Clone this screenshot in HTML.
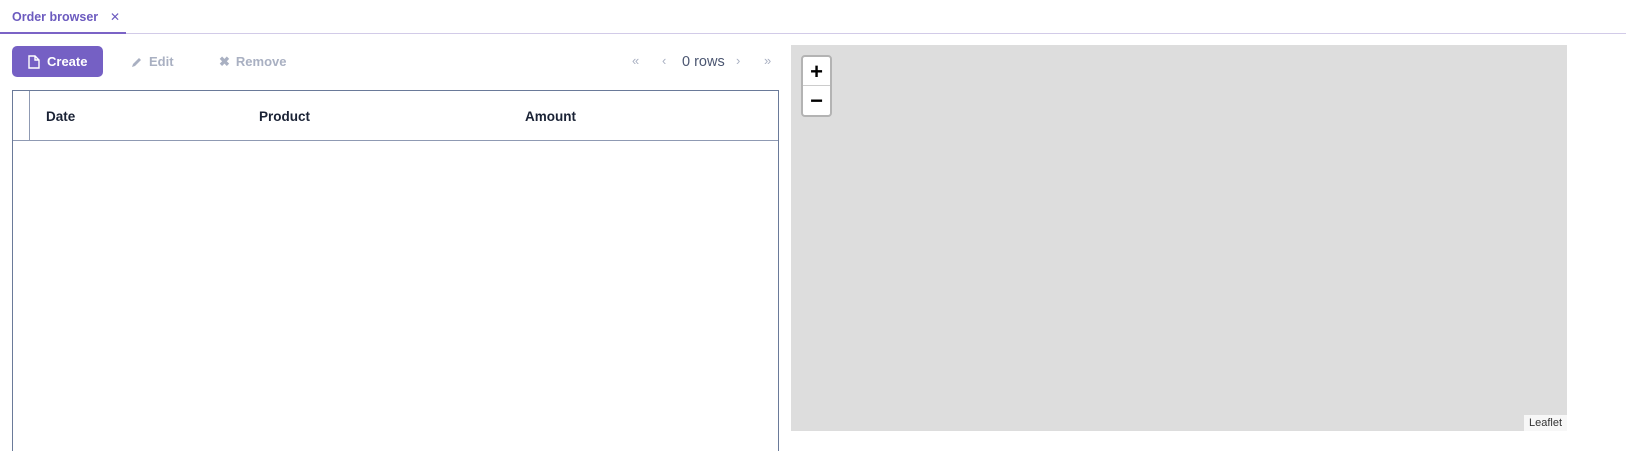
<!DOCTYPE html>
<html><head><meta charset="utf-8"><style>
*{box-sizing:border-box;margin:0;padding:0}
html,body{width:1626px;height:451px;overflow:hidden}
body{background:#fff;font-family:"Liberation Sans",sans-serif;position:relative}
.tabbar{position:absolute;left:0;top:0;width:1626px;height:34px;border-bottom:1px solid #d2cbe8}
.tab{position:absolute;left:0;top:0;width:126px;height:34px;border-bottom:2px solid #7b63c6;color:#6c5bbf;font-size:12.5px;font-weight:bold;padding:10px 0 0 12px}
.tab .x{position:absolute;left:110px;top:10px;font-size:12px;font-weight:normal;color:#6c5bbf}
.btn{position:absolute;top:46px;height:31px;font-size:13px;font-weight:bold;display:flex;align-items:center}
.create{left:12px;width:91px;background:#7560c4;border-radius:5px;color:#fff;padding-left:16px}
.dis{color:#a9b0c2}
.pg{position:absolute;top:53px;color:#a9b0c2;font-size:13px}
.rows{position:absolute;left:682px;top:54px;font-size:14.5px;color:#4b5671}
.table{position:absolute;left:12px;top:90px;width:767px;height:361px;border:1px solid #6a7a99;border-bottom:none}
.hdr{position:absolute;left:0;top:0;width:765px;height:50px;border-bottom:1px solid #8f9ab3}
.sel{position:absolute;left:16px;top:0;width:1px;height:50px;background:#8f9ab3}
.th{position:absolute;top:18px;font-size:13.5px;font-weight:bold;color:#1a2235}
.map{position:absolute;left:791px;top:45px;width:776px;height:386px;background:#dddddd}
.zoom{position:absolute;left:10px;top:10px;width:31px;height:62px;border:2px solid #b3b3b3;border-radius:4px;background:#fff}
.zoom div{height:29px;text-align:center;font-size:22px;font-weight:bold;line-height:29px;color:#000}
.zoom div:first-child{border-bottom:1px solid #ccc}
.attr{position:absolute;right:0;bottom:0;background:rgba(255,255,255,.75);font-size:11px;padding:2px 5px;color:#333}
</style></head><body>
<div class="tabbar"><div class="tab">Order browser<span class="x">✕</span></div></div>
<div class="btn create"><svg width="12" height="14" viewBox="0 0 12 14" style="margin-right:7px"><path d="M1 1h6l4 4v8H1z M7 1v4h4" fill="none" stroke="#fff" stroke-width="1.4"/></svg>Create</div>
<div class="btn dis" style="left:131px"><svg width="12" height="12" viewBox="0 0 12 12" style="margin-right:6px"><path d="M1 11l1-3 6-6 2 2-6 6z" fill="#a9b0c2"/></svg>Edit</div>
<div class="btn dis" style="left:219px"><span style="font-size:13px;margin-right:6px">✖</span>Remove</div>
<div class="pg" style="left:632px">«</div>
<div class="pg" style="left:662px">‹</div>
<div class="rows">0 rows</div>
<div class="pg" style="left:736px">›</div>
<div class="pg" style="left:764px">»</div>
<div class="table"><div class="hdr"><div class="sel"></div>
<div class="th" style="left:33px">Date</div>
<div class="th" style="left:246px">Product</div>
<div class="th" style="left:512px">Amount</div></div></div>
<div class="map"><div class="zoom"><div>+</div><div>−</div></div><div class="attr">Leaflet</div></div>
</body></html>
